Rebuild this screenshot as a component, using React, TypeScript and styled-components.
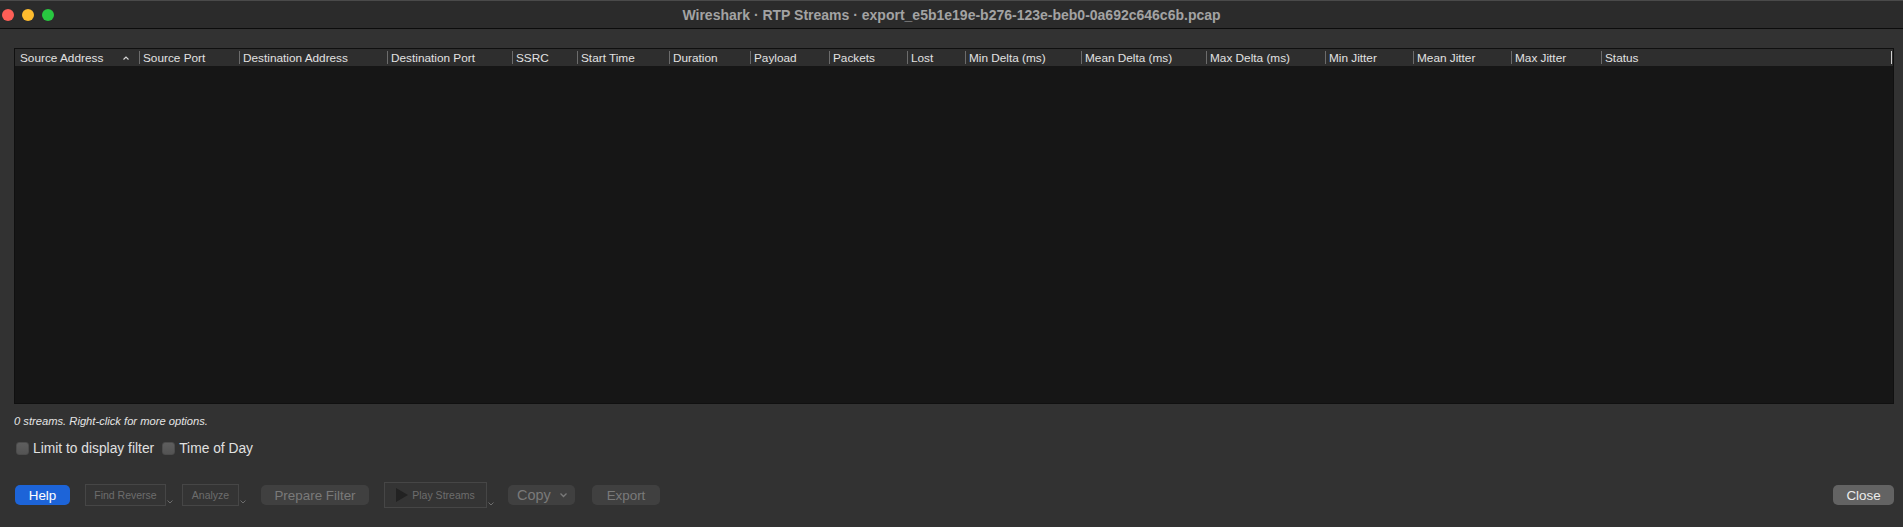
import React from "react";
import styled, { createGlobalStyle } from "styled-components";

const GlobalStyle = createGlobalStyle`
  html, body {
    margin: 0;
    padding: 0;
    background: #323232;
    font-family: "Liberation Sans", Arial, sans-serif;
  }
`;

type Column = { name: string; width?: number; sorted?: boolean };

const columns: Column[] = [
  { name: "Source Address", width: 124, sorted: true },
  { name: "Source Port", width: 100 },
  { name: "Destination Address", width: 148 },
  { name: "Destination Port", width: 125 },
  { name: "SSRC", width: 65 },
  { name: "Start Time", width: 92 },
  { name: "Duration", width: 81 },
  { name: "Payload", width: 79 },
  { name: "Packets", width: 78 },
  { name: "Lost", width: 58 },
  { name: "Min Delta (ms)", width: 116 },
  { name: "Mean Delta (ms)", width: 125 },
  { name: "Max Delta (ms)", width: 119 },
  { name: "Min Jitter", width: 88 },
  { name: "Mean Jitter", width: 98 },
  { name: "Max Jitter", width: 90 },
  { name: "Status" },
];

const Window = styled.div`
  width: 1903px;
  height: 527px;
  display: flex;
  flex-direction: column;
  background: #323232;
  overflow: hidden;
`;

const TitleBar = styled.div`
  display: flex;
  align-items: center;
  background: #2b2b2b;
  border-top: 1px solid #4a4a4a;
  border-bottom: 1px solid #0c0c0c;
  box-sizing: border-box;
  height: 29px;
  padding-left: 2px;
`;

const Lights = styled.div`
  display: flex;
  gap: 8px;
  width: 100px;
`;

const Light = styled.span<{ $color: string }>`
  width: 12px;
  height: 12px;
  border-radius: 50%;
  background: ${(p) => p.$color};
`;

const Title = styled.div`
  flex: 1;
  text-align: center;
  font-size: 14px;
  font-weight: bold;
  color: #a3a3a3;
  margin-right: 102px;
`;

const Content = styled.div`
  flex: 1;
  display: flex;
  flex-direction: column;
  padding: 19px 9px 0 14px;
`;

const Table = styled.div`
  height: 356px;
  display: flex;
  flex-direction: column;
  border: 1px solid #101010;
  box-sizing: border-box;
  background: #161616;
`;

const HeaderRow = styled.div`
  height: 17px;
  display: flex;
  background: #2e2e2e;
`;

const HeaderCell = styled.div<{ $width?: number; $first?: boolean; $last?: boolean }>`
  position: relative;
  flex: ${(p) => (p.$width ? `0 0 ${p.$width}px` : "1")};
  box-sizing: border-box;
  display: flex;
  align-items: center;
  justify-content: space-between;
  padding: 0 10px 0 ${(p) => (p.$first ? 5 : 4)}px;
  font-size: 11.8px;
  color: #e2e2e2;
  white-space: nowrap;
  &::before {
    content: "";
    display: ${(p) => (p.$first ? "none" : "block")};
    position: absolute;
    left: 0;
    top: 2px;
    bottom: 2px;
    width: 1px;
    background: #6c6c6c;
  }
  &::after {
    content: "";
    display: ${(p) => (p.$last ? "block" : "none")};
    position: absolute;
    right: 1px;
    top: 2px;
    bottom: 2px;
    width: 1px;
    background: #cfcfcf;
  }
`;

const Body = styled.div`
  flex: 1;
  background: #161616;
`;

const StatusText = styled.div`
  margin-top: 11px;
  font-size: 11.2px;
  font-style: italic;
  color: #e4e4e4;
  line-height: 13px;
`;

const CheckRow = styled.div`
  margin-top: 12px;
  display: flex;
  align-items: center;
  height: 16px;
  padding-left: 2px;
`;

const CheckLabel = styled.label`
  display: flex;
  align-items: center;
  gap: 4px;
  margin-right: 8px;
  font-size: 13.8px;
  color: #e0e0e0;
`;

const Box = styled.span`
  width: 13px;
  height: 13px;
  border-radius: 3px;
  box-sizing: border-box;
  background: linear-gradient(#5e5e5e, #545454);
  border: 1px solid #4c4c4c;
`;

const ButtonRow = styled.div`
  margin-top: 26px;
  height: 26px;
  display: flex;
  align-items: center;
  padding-left: 1px;
`;

const PushButton = styled.div<{ $width: number; $variant?: "blue" | "disabled" | "normal"; $ml?: number }>`
  width: ${(p) => p.$width}px;
  height: 20px;
  margin-left: ${(p) => p.$ml ?? 0}px;
  box-sizing: border-box;
  border-radius: 5px;
  display: flex;
  align-items: center;
  justify-content: center;
  font-size: 13.4px;
  background: ${(p) =>
    p.$variant === "blue" ? "#1d64d8" : p.$variant === "normal" ? "#636363" : "#404040"};
  color: ${(p) =>
    p.$variant === "blue" ? "#ffffff" : p.$variant === "normal" ? "#ececec" : "#7a7a7a"};
`;

const MenuGroup = styled.div<{ $ml?: number }>`
  display: flex;
  align-items: flex-end;
  margin-left: ${(p) => p.$ml ?? 0}px;
`;

const MenuBox = styled.div<{ $width: number; $height: number }>`
  width: ${(p) => p.$width}px;
  height: ${(p) => p.$height}px;
  box-sizing: border-box;
  border: 1px solid #464646;
  background: #343434;
  display: flex;
  align-items: center;
  justify-content: center;
  gap: 4px;
  font-size: 10.5px;
  color: #6d6d6d;
`;

const Chevron = styled.svg`
  margin: 0 2px 2px 1px;
`;

const CopyButton = styled(PushButton)`
  justify-content: space-between;
  padding: 0 8px 0 9px;
  font-size: 14.5px;
`;

const Spacer = styled.div`
  flex: 1;
`;

const SmallChevron = () => (
  <Chevron width="6" height="4" viewBox="0 0 6 4">
    <polyline points="0.5,0.5 3,3 5.5,0.5" fill="none" stroke="#6d6d6d" strokeWidth="1" />
  </Chevron>
);

export default function App() {
  return (
    <>
      <GlobalStyle />
      <Window>
        <TitleBar>
          <Lights>
            <Light $color="#fe5f57" />
            <Light $color="#febc2e" />
            <Light $color="#28c840" />
          </Lights>
          <Title>Wireshark · RTP Streams · export_e5b1e19e-b276-123e-beb0-0a692c646c6b.pcap</Title>
        </TitleBar>
        <Content>
          <Table>
            <HeaderRow>
              {columns.map((c, i) => (
                <HeaderCell
                  key={c.name}
                  $width={c.width}
                  $first={i === 0}
                  $last={i === columns.length - 1}
                >
                  <span>{c.name}</span>
                  {c.sorted && (
                    <svg width="6" height="4" viewBox="0 0 6 4">
                      <polyline points="0.5,3.5 3,1 5.5,3.5" fill="none" stroke="#d8d8d8" strokeWidth="1.1" />
                    </svg>
                  )}
                </HeaderCell>
              ))}
            </HeaderRow>
            <Body />
          </Table>
          <StatusText>0 streams. Right-click for more options.</StatusText>
          <CheckRow>
            <CheckLabel>
              <Box />
              Limit to display filter
            </CheckLabel>
            <CheckLabel>
              <Box />
              Time of Day
            </CheckLabel>
          </CheckRow>
          <ButtonRow>
            <PushButton $width={55} $variant="blue">Help</PushButton>
            <MenuGroup $ml={15}>
              <MenuBox $width={81} $height={22}>Find Reverse</MenuBox>
              <SmallChevron />
            </MenuGroup>
            <MenuGroup $ml={7}>
              <MenuBox $width={57} $height={22}>Analyze</MenuBox>
              <SmallChevron />
            </MenuGroup>
            <PushButton $width={108} $ml={13}>Prepare Filter</PushButton>
            <MenuGroup $ml={15}>
              <MenuBox $width={103} $height={26}>
                <svg width="12" height="14" viewBox="0 0 12 14">
                  <polygon points="0,0 12,7 0,14" fill="#222222" />
                </svg>
                Play Streams
              </MenuBox>
              <SmallChevron />
            </MenuGroup>
            <CopyButton $width={67} $ml={12}>
              <span>Copy</span>
              <svg width="7" height="5" viewBox="0 0 7 5">
                <polyline points="0.5,0.5 3.5,3.5 6.5,0.5" fill="none" stroke="#7a7a7a" strokeWidth="1.3" />
              </svg>
            </CopyButton>
            <PushButton $width={68} $ml={17}>Export</PushButton>
            <Spacer />
            <PushButton $width={61} $variant="normal">Close</PushButton>
          </ButtonRow>
        </Content>
      </Window>
    </>
  );
}
